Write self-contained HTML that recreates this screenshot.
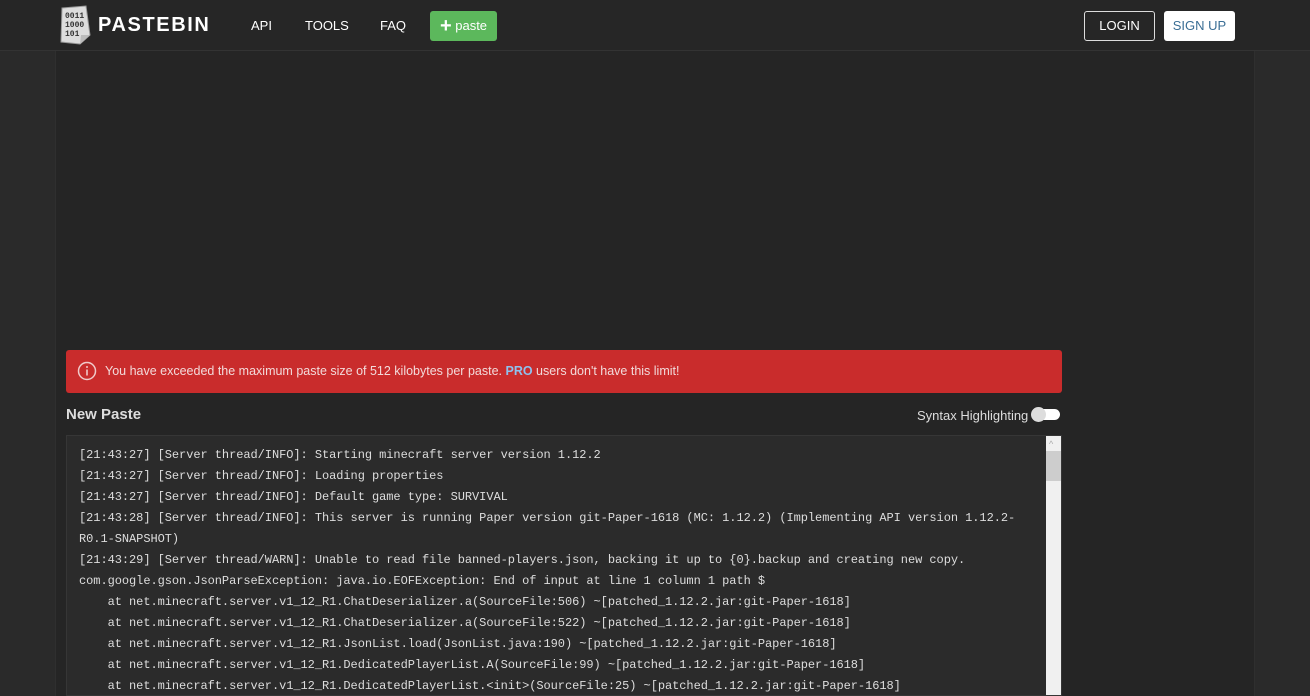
<!DOCTYPE html>
<html><head><style>
*{box-sizing:border-box;margin:0;padding:0}
body{width:1310px;height:696px;overflow:hidden;background:#2a2a2a;font-family:"Liberation Sans",sans-serif;position:relative}
.hdr{position:absolute;left:0;top:0;width:1310px;height:51px;background:#262626;border-bottom:1px solid #333}
.main{position:absolute;left:55px;top:51px;width:1200px;height:645px;background:#252525;border-left:1px solid #2f2f2f;border-right:1px solid #2f2f2f}
.nav{position:absolute;top:18px;color:#fff;font-size:13px}
.btn{position:absolute;top:11px;height:30px;border-radius:3px;font-size:13px;text-align:center;line-height:30px}
.alert{position:absolute;left:66px;top:350px;width:996px;height:43px;background:#c92c2c;border-radius:3px;color:#f2dada;font-size:12.5px;line-height:43px;padding-left:39px}
.ta{position:absolute;left:66px;top:435px;width:996px;height:261px;background:#2b2b2b;border:1px solid #363636;overflow:hidden}
pre{font-family:"Liberation Mono",monospace;font-size:12px;letter-spacing:-0.055px;line-height:21px;color:#ddd;padding:9px 0 0 12px;white-space:pre}
.sb{position:absolute;right:0;top:0;width:15px;height:261px;background:#f0f0f0}
</style></head><body>
<div class="hdr">
<svg style="position:absolute;left:56px;top:5px" width="38" height="40" viewBox="0 0 38 40"><path d="M6 3 L30 1 L34 30 L24 39 L5 37 Z" fill="#ddd" stroke="#999"/><path d="M24 39 L25 30 L34 30" fill="#bbb"/><text x="9" y="13" font-size="8" font-family="Liberation Mono" font-weight="bold" fill="#333">0011</text><text x="9" y="22" font-size="8" font-family="Liberation Mono" font-weight="bold" fill="#333">1000</text><text x="9" y="31" font-size="8" font-family="Liberation Mono" font-weight="bold" fill="#333">101</text></svg>
<div style="position:absolute;left:98px;top:14px;color:#fff;font-size:20px;font-weight:bold;letter-spacing:1.6px">PASTEBIN</div>
<div class="nav" style="left:251px">API</div>
<div class="nav" style="left:305px">TOOLS</div>
<div class="nav" style="left:380px">FAQ</div>
<div class="btn" style="left:430px;width:67px;background:#5cb85c;color:#fff"><b style="font-size:20px;vertical-align:-2px">+</b> paste</div>
<div class="btn" style="left:1084px;width:71px;border:1px solid #ddd;color:#fff;line-height:28px">LOGIN</div>
<div class="btn" style="left:1164px;width:71px;background:#fff;color:#3a6e95">SIGN UP</div>
</div>
<div class="main"></div>
<div class="alert"><svg style="position:absolute;left:11px;top:11px" width="20" height="20" viewBox="0 0 20 20"><circle cx="10" cy="10" r="8.5" fill="none" stroke="#f0caca" stroke-width="1.5"/><rect x="9.2" y="8.5" width="1.6" height="6" fill="#f0caca"/><circle cx="10" cy="6" r="1" fill="#f0caca"/></svg>You have exceeded the maximum paste size of 512 kilobytes per paste. <b style="color:#8ec1ee">PRO</b> users don't have this limit!</div>
<div style="position:absolute;left:66px;top:406px;color:#ddd;font-size:15px;font-weight:bold">New Paste</div>
<div style="position:absolute;left:917px;top:408px;color:#ddd;font-size:13px">Syntax Highlighting</div>
<div style="position:absolute;left:1032px;top:409px;width:28px;height:11px;background:#fff;border-radius:6px"></div>
<div style="position:absolute;left:1031px;top:407px;width:15px;height:15px;background:#ddd;border-radius:50%"></div>
<div class="ta"><pre>[21:43:27] [Server thread/INFO]: Starting minecraft server version 1.12.2
[21:43:27] [Server thread/INFO]: Loading properties
[21:43:27] [Server thread/INFO]: Default game type: SURVIVAL
[21:43:28] [Server thread/INFO]: This server is running Paper version git-Paper-1618 (MC: 1.12.2) (Implementing API version 1.12.2-
R0.1-SNAPSHOT)
[21:43:29] [Server thread/WARN]: Unable to read file banned-players.json, backing it up to {0}.backup and creating new copy.
com.google.gson.JsonParseException: java.io.EOFException: End of input at line 1 column 1 path $
    at net.minecraft.server.v1_12_R1.ChatDeserializer.a(SourceFile:506) ~[patched_1.12.2.jar:git-Paper-1618]
    at net.minecraft.server.v1_12_R1.ChatDeserializer.a(SourceFile:522) ~[patched_1.12.2.jar:git-Paper-1618]
    at net.minecraft.server.v1_12_R1.JsonList.load(JsonList.java:190) ~[patched_1.12.2.jar:git-Paper-1618]
    at net.minecraft.server.v1_12_R1.DedicatedPlayerList.A(SourceFile:99) ~[patched_1.12.2.jar:git-Paper-1618]
    at net.minecraft.server.v1_12_R1.DedicatedPlayerList.&lt;init&gt;(SourceFile:25) ~[patched_1.12.2.jar:git-Paper-1618]</pre>
<div class="sb"><div style="position:absolute;top:15px;left:0;width:15px;height:30px;background:#cdcdcd"></div><div style="position:absolute;top:3px;left:3px;color:#aaa;font-size:9px">^</div></div>
</div>
</body></html>
